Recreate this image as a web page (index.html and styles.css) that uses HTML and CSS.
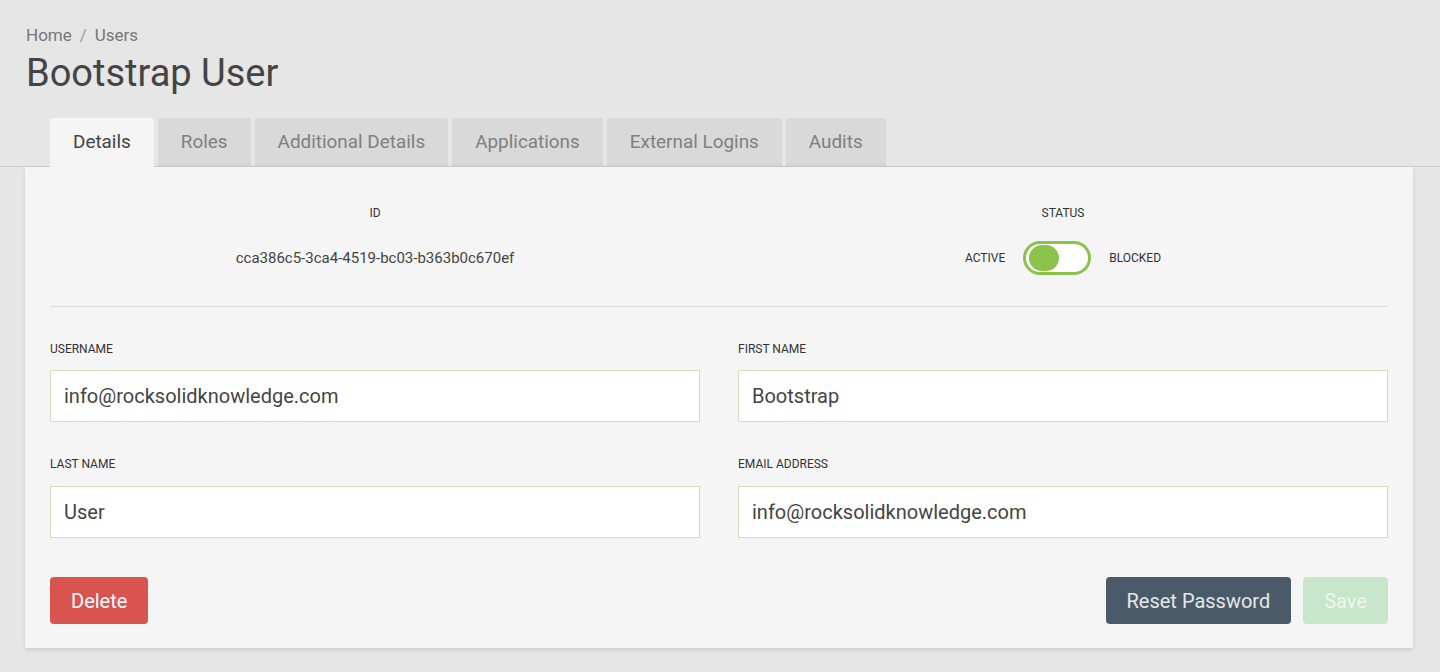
FILE: index.html
```html
<!DOCTYPE html>
<html lang="en">
<head>
<meta charset="utf-8">
<title>Bootstrap User</title>
<link rel="stylesheet" href="styles.css">
</head>
<body>
<header class="page-header">
  <nav class="breadcrumb"><span>Home</span><span class="sep">/</span><span>Users</span></nav>
  <h1 class="title">Bootstrap User</h1>
</header>
<div class="tabstrip">
  <div class="tabs">
    <div class="tab active">Details</div>
    <div class="tab">Roles</div>
    <div class="tab">Additional Details</div>
    <div class="tab">Applications</div>
    <div class="tab">External Logins</div>
    <div class="tab">Audits</div>
  </div>
</div>
<main class="card">
  <section class="summary">
    <div class="summary-col">
      <div class="label">ID</div>
      <div class="summary-row"><span class="id-value">cca386c5-3ca4-4519-bc03-b363b0c670ef</span></div>
    </div>
    <div class="summary-col">
      <div class="label">STATUS</div>
      <div class="summary-row status-row">
        <span class="label">ACTIVE</span>
        <span class="toggle"><span class="knob"></span></span>
        <span class="label">BLOCKED</span>
      </div>
    </div>
  </section>
  <hr class="divider">
  <section class="form-grid">
    <div class="field">
      <div class="label">USERNAME</div>
      <div class="input">info@rocksolidknowledge.com</div>
    </div>
    <div class="field">
      <div class="label">FIRST NAME</div>
      <div class="input">Bootstrap</div>
    </div>
    <div class="field">
      <div class="label">LAST NAME</div>
      <div class="input">User</div>
    </div>
    <div class="field">
      <div class="label">EMAIL ADDRESS</div>
      <div class="input">info@rocksolidknowledge.com</div>
    </div>
  </section>
  <section class="actions">
    <button class="btn btn-danger">Delete</button>
    <div class="actions-right">
      <button class="btn btn-dark">Reset Password</button>
      <button class="btn btn-save">Save</button>
    </div>
  </section>
</main>
</body>
</html>
```
FILE: styles.css
```css
* { box-sizing: border-box; }
html, body { margin: 0; padding: 0; }
body {
  background: #e6e6e6;
  font-family: Roboto, "Liberation Sans", Arial, sans-serif;
  color: #444;
  height: 672px;
  overflow: hidden;
}
.page-header {
  padding: 24px 26px 0;
}
.breadcrumb {
  font-size: 17px;
  line-height: 22px;
  color: #777;
  display: flex;
  gap: 8px;
}
.breadcrumb .sep { color: #999; }
.title {
  margin: 5px 0 0;
  font-size: 38px;
  line-height: 44px;
  font-weight: 400;
  color: #444;
}
.tabstrip {
  margin-top: 23px;
  border-bottom: 1px solid #cbcbcb;
  padding-left: 50px;
}
.tabs {
  display: flex;
  gap: 4px;
}
.tab {
  height: 48px;
  line-height: 48px;
  padding: 0 23px;
  font-size: 18.9px;
  color: #808080;
  background: #d9d9d9;
  border-radius: 3px 3px 0 0;
  box-shadow: inset 0 -2px 2px -1px rgba(0,0,0,0.06);
}
.tab.active {
  background: #f5f5f5;
  color: #444;
  box-shadow: none;
  margin-bottom: -1px;
  height: 49px;
}
.card {
  margin: 0 27px 0 25px;
  background: #f5f5f5;
  padding: 38px 25px 24px;
  box-shadow: 0 2px 4px rgba(0,0,0,0.12);
}
.label {
  font-size: 12px;
  line-height: 16px;
  color: #333;
  text-transform: uppercase;
}
.summary {
  display: grid;
  grid-template-columns: 1fr 1fr;
  column-gap: 38px;
}
.summary-col {
  display: flex;
  flex-direction: column;
  align-items: center;
  gap: 19px;
}
.summary-row {
  height: 35px;
  display: flex;
  align-items: center;
  justify-content: center;
}
.id-value {
  font-size: 15px;
  color: #444;
}
.status-row { gap: 18px; }
.toggle {
  width: 68px;
  height: 34px;
  border: 3px solid #8bc34a;
  border-radius: 17px;
  background: #fff;
  display: flex;
  align-items: center;
  padding-left: 3px;
}
.knob {
  width: 30px;
  height: 26px;
  border-radius: 13px;
  background: #8bc34a;
}
.divider {
  border: 0;
  border-top: 1px solid #dcdcdc;
  margin: 31px 0 34px;
}
.form-grid {
  display: grid;
  grid-template-columns: 1fr 1fr;
  column-gap: 38px;
  row-gap: 34px;
}
.field .label { margin-bottom: 13px; }
.field:nth-child(n+3) .label { margin-bottom: 14px; }
.input {
  height: 52px;
  border: 1px solid #d3dfbf;
  background: #fff;
  font-size: 20px;
  line-height: 50px;
  padding: 0 13px;
  color: #444;
}
.actions {
  margin-top: 39px;
  display: flex;
  justify-content: space-between;
}
.actions-right { display: flex; gap: 12px; }
.btn {
  height: 47px;
  padding: 0 21px;
  border: 0;
  border-radius: 4px;
  font-family: Roboto, "Liberation Sans", Arial, sans-serif;
  font-size: 20px;
  color: #fff;
  cursor: pointer;
}
.btn-danger { background: #d9534f; }
.btn-dark { background: #4a5a68; color: #e4e8ea; }
.btn-save { background: #c8e6c9; color: #eef6ee; }
```
